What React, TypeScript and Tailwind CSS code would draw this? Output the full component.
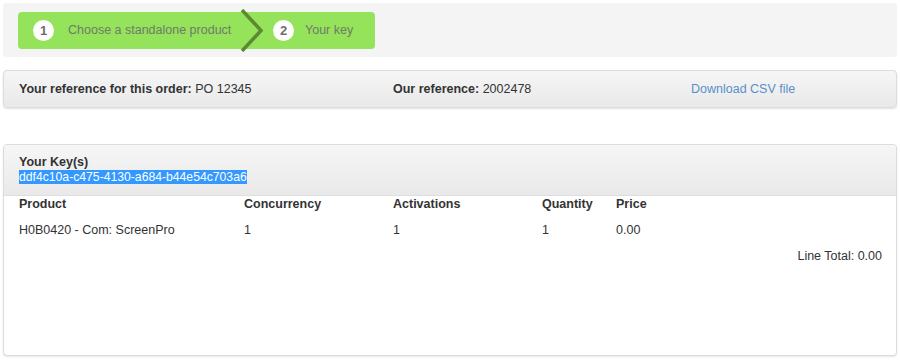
import React from "react";

const font = { fontFamily: '"Liberation Sans", Arial, sans-serif' };

function StepCircle({ n }: { n: number }) {
  return (
    <div className="w-[21px] h-[21px] rounded-full bg-white flex items-center justify-center text-[13px] font-bold text-[#6d6d6d]">
      {n}
    </div>
  );
}

export default function App() {
  return (
    <div className="w-[900px] h-[360px] bg-white text-[12.5px] text-[#333]" style={font}>
      {/* Steps well */}
      <div className="mx-[3px] pt-[3px]">
        <div className="h-[54px] rounded-[4px] bg-[#f4f4f4] px-[15px] pt-[9px]">
          <div className="relative h-[37px] w-[357px] rounded-[4px] bg-[#95e25b] flex items-center">
            <div className="flex items-center pl-[15px] gap-[14px]">
              <StepCircle n={1} />
              <span className="text-[#707a68] text-[12.5px]">Choose a standalone product</span>
            </div>
            <svg className="absolute left-[222px] top-[-3px]" width="26" height="43" viewBox="0 0 26 43">
              <polyline points="2,1 21,21.5 2,42" fill="none" stroke="#5c8a33" strokeWidth="3.5" />
            </svg>
            <div className="absolute left-[255px] flex items-center gap-[11px]">
              <StepCircle n={2} />
              <span className="text-[#707a68] text-[12.5px]">Your key</span>
            </div>
          </div>
        </div>
      </div>

      {/* Reference panel */}
      <div className="mx-[3px] mt-[13px] h-[38px] rounded-[4px] border border-[#dcdcdc] bg-gradient-to-b from-[#f6f6f6] to-[#e9e9e9] shadow-[0_1px_2px_rgba(0,0,0,0.12)] flex items-center pl-[15px]">
        <div className="w-[374px]">
          <span className="font-bold">Your reference for this order:</span> PO 12345
        </div>
        <div className="w-[298px]">
          <span className="font-bold">Our reference:</span> 2002478
        </div>
        <div className="text-[#5a8fc8]">Download CSV file</div>
      </div>

      {/* Keys panel */}
      <div className="mx-[3px] mt-[36px] h-[212px] rounded-[4px] border border-[#dcdcdc] bg-white shadow-[0_1px_2px_rgba(0,0,0,0.1)] overflow-hidden">
        <div className="h-[51px] bg-gradient-to-b from-[#f6f6f6] to-[#e9e9e9] border-b border-[#dedede] pl-[15px] pt-[10px] leading-[15px]">
          <div className="font-bold">Your Key(s)</div>
          <div>
            <span className="bg-[#3399ff] text-white text-[12.2px]">ddf4c10a-c475-4130-a684-b44e54c703a6</span>
          </div>
        </div>
        <div className="px-[15px]">
          <div className="flex font-bold h-[17px] items-center">
            <div className="w-[225px]">Product</div>
            <div className="w-[149px]">Concurrency</div>
            <div className="w-[149px]">Activations</div>
            <div className="w-[74px]">Quantity</div>
            <div>Price</div>
          </div>
          <div className="flex mt-[9px] h-[17px] items-center">
            <div className="w-[225px]">H0B0420 - Com: ScreenPro</div>
            <div className="w-[149px]">1</div>
            <div className="w-[149px]">1</div>
            <div className="w-[74px]">1</div>
            <div>0.00</div>
          </div>
          <div className="flex justify-end mt-[9px] h-[17px] items-center -mr-[1px]">
            <div>Line Total: 0.00</div>
          </div>
        </div>
      </div>
    </div>
  );
}
